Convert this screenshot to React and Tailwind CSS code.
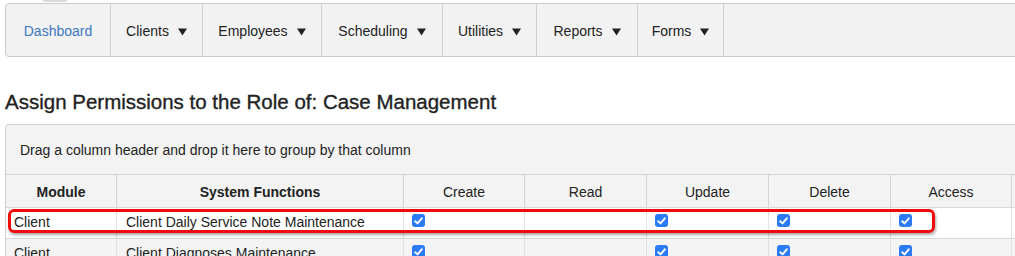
import React from "react";

const navItems = [
  { label: "Dashboard", w: "w-[105px]", active: true },
  { label: "Clients", w: "w-[92px]" },
  { label: "Employees", w: "w-[119px]" },
  { label: "Scheduling", w: "w-[121px]" },
  { label: "Utilities", w: "w-[94px]" },
  { label: "Reports", w: "w-[101px]" },
  { label: "Forms", w: "w-[86px]" },
];

function Caret() {
  return (
    <svg width="9" height="8" viewBox="0 0 9 8" className="ml-[9px] mt-[1px]">
      <path d="M0 0.5 L9 0.5 L4.5 7.5 Z" fill="#222" />
    </svg>
  );
}

function Check() {
  return (
    <span className="flex w-[13px] h-[13px] rounded-[3px] bg-[#2a7bf5] items-center justify-center">
      <svg width="9" height="8" viewBox="0 0 9 8">
        <path d="M1.2 4.3 L3.5 6.4 L7.8 1.3" stroke="#fff" strokeWidth="1.9" fill="none" strokeLinecap="round" strokeLinejoin="round" />
      </svg>
    </span>
  );
}

const cols = [
  { label: "Module", w: "w-[111px]", bold: true },
  { label: "System Functions", w: "w-[287px]", bold: true },
  { label: "Create", w: "w-[121px]" },
  { label: "Read", w: "w-[122px]" },
  { label: "Update", w: "w-[122px]" },
  { label: "Delete", w: "w-[122px]" },
  { label: "Access", w: "w-[121px]" },
  { label: "", w: "w-[60px]" },
];

const rows = [
  { mod: "Client", fn: "Client Daily Service Note Maintenance", c: [true, false, true, true, true], alt: false },
  { mod: "Client", fn: "Client Diagnoses Maintenance", c: [true, false, true, true, true], alt: true },
];

export default function App() {
  return (
    <div className="w-[1015px] h-[256px] overflow-hidden bg-white relative" style={{ fontFamily: '"Liberation Sans", Arial, sans-serif' }}>
      <div className="absolute left-[42px] top-[-6px] w-[26px] h-[8px] rounded-full bg-[#d8d8d8]" />
      <div className="pt-[3px] pl-[5px]">
        <nav className="flex h-[54px] w-[1040px] bg-[#f2f2f2] border border-[#c9c9c9] rounded-l-[4px]">
          {navItems.map((n) => (
            <div key={n.label} className={`${n.w} flex items-center justify-center pt-[2px] border-r border-[#cfcfcf] text-[14px] ${n.active ? "text-[#3b78c2]" : "text-[#222]"}`}>
              <span>{n.label}</span>
              {!n.active && <Caret />}
            </div>
          ))}
        </nav>
      </div>
      <h2 className="mt-[33px] ml-[5px] text-[20.5px] leading-[24px] text-[#222] font-normal [-webkit-text-stroke:0.35px_#222]">
        Assign Permissions to the Role of: Case Management
      </h2>
      <div className="mt-[10px] ml-[5px] w-[1040px] border border-[#cfcfcf] rounded-tl-[4px] bg-[#f3f3f3] text-[#222]">
        <div className="h-[50px] flex items-center pl-[14px] pt-[1px] text-[14px] border-b border-[#d3d3d3]">
          Drag a column header and drop it here to group by that column
        </div>
        <div className="flex h-[33px] border-b border-[#d8d8d8]">
          {cols.map((c, i) => (
            <div key={i} className={`${c.w} shrink-0 flex items-center justify-center pt-[2px] text-[14px] border-r border-[#d3d3d3] ${c.bold ? "font-bold" : ""}`}>
              {c.label}
            </div>
          ))}
        </div>
        {rows.map((r, ri) => (
          <div key={ri} className={`flex h-[31px] border-b border-[#d8d8d8] ${r.alt ? "bg-[#f4f4f4]" : "bg-white"} text-[14px]`}>
            <div className="w-[111px] shrink-0 pl-[8px] pt-[4px] border-r border-[#e2e2e2]">{r.mod}</div>
            <div className="w-[287px] shrink-0 pl-[9px] pt-[4px] border-r border-[#e2e2e2]">{r.fn}</div>
            {r.c.map((v, ci) => (
              <div key={ci} className={`${ci === 4 ? "w-[121px]" : ci === 0 ? "w-[121px]" : "w-[122px]"} shrink-0 pl-[8px] pt-[6px] border-r border-[#e2e2e2]`}>
                {v && <Check />}
              </div>
            ))}
            <div className="w-[60px] shrink-0" />
          </div>
        ))}
      </div>
      <div className="absolute left-[8px] top-[209px] w-[927px] h-[24px] border-[3px] border-[#f00a0a] rounded-[6px] shadow-[1px_2px_3px_rgba(0,0,0,0.35)]" />
    </div>
  );
}
